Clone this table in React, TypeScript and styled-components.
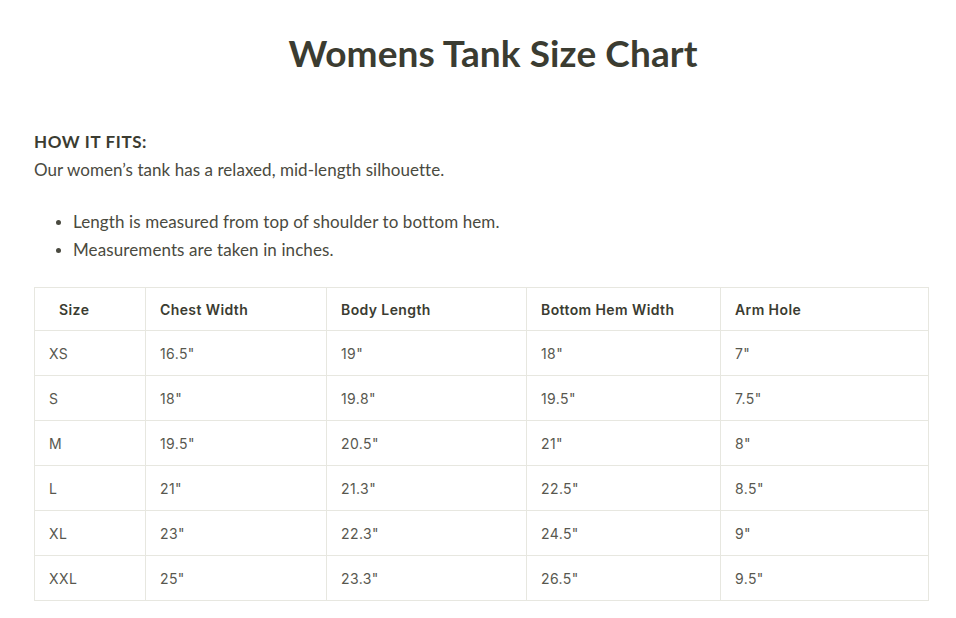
import React from 'react';
import styled, { createGlobalStyle } from 'styled-components';

const GlobalStyle = createGlobalStyle`
  body {
    margin: 0;
    background: #ffffff;
  }
`;

const Page = styled.div`
  padding: 0 28px 18px 34px;
  color: #3c3d33;
  font-family: Lato, 'Noto Sans', sans-serif;
`;

const Title = styled.h1`
  margin: 0;
  padding: 30px 0 0 24px;
  text-align: center;
  font-size: 37px;
  font-weight: 700;
  line-height: 46px;
  letter-spacing: 0.1px;
  color: #3b3c31;
`;

const FitHeading = styled.h3`
  margin: 53px 0 0;
  font-size: 17px;
  font-weight: 700;
  line-height: 26px;
  letter-spacing: 0.6px;
  text-transform: uppercase;
  color: #3b3c31;
`;

const Text = styled.p`
  margin: 2px 0 0;
  font-size: 17px;
  font-weight: 400;
  line-height: 26px;
  letter-spacing: 0.05px;
  color: #4a4a40;
`;

const Bullets = styled.ul`
  margin: 25px 0 0;
  padding-left: 39px;
  font-size: 17px;
  line-height: 28px;
  letter-spacing: 0.1px;
  color: #4a4a40;

  li::marker {
    font-size: 15px;
  }
`;

const Table = styled.table`
  width: 894px;
  margin-top: 23px;
  border-collapse: collapse;
  table-layout: fixed;
  font-family: Inter, 'Liberation Sans', sans-serif;
  font-size: 14px;
  letter-spacing: 0.4px;
`;

const Th = styled.th<{ $pad?: number }>`
  height: 42px;
  padding: 0 14px 0 ${(p) => p.$pad ?? 14}px;
  border: 1px solid #e7e7e0;
  text-align: left;
  font-weight: 600;
  color: #3b3c31;
`;

const Td = styled.td`
  height: 44px;
  padding: 0 14px;
  border: 1px solid #e7e7e0;
  font-weight: 400;
  color: #58584f;
`;

const columns = [
  { label: 'Size', width: 111, pad: 24 },
  { label: 'Chest Width', width: 181 },
  { label: 'Body Length', width: 200 },
  { label: 'Bottom Hem Width', width: 194 },
  { label: 'Arm Hole', width: 208 },
];

const rows = [
  ['XS', '16.5"', '19"', '18"', '7"'],
  ['S', '18"', '19.8"', '19.5"', '7.5"'],
  ['M', '19.5"', '20.5"', '21"', '8"'],
  ['L', '21"', '21.3"', '22.5"', '8.5"'],
  ['XL', '23"', '22.3"', '24.5"', '9"'],
  ['XXL', '25"', '23.3"', '26.5"', '9.5"'],
];

export default function App() {
  return (
    <Page>
      <GlobalStyle />
      <Title>Womens Tank Size Chart</Title>

      <FitHeading>How it fits:</FitHeading>
      <Text>Our women’s tank has a relaxed, mid-length silhouette.</Text>
      <Bullets>
        <li>Length is measured from top of shoulder to bottom hem.</li>
        <li>Measurements are taken in inches.</li>
      </Bullets>

      <Table>
        <colgroup>
          {columns.map((c) => (
            <col key={c.label} style={{ width: c.width }} />
          ))}
        </colgroup>
        <thead>
          <tr>
            {columns.map((c) => (
              <Th key={c.label} $pad={c.pad}>
                {c.label}
              </Th>
            ))}
          </tr>
        </thead>
        <tbody>
          {rows.map((r) => (
            <tr key={r[0]}>
              {r.map((v, i) => (
                <Td key={i}>{v}</Td>
              ))}
            </tr>
          ))}
        </tbody>
      </Table>
    </Page>
  );
}
